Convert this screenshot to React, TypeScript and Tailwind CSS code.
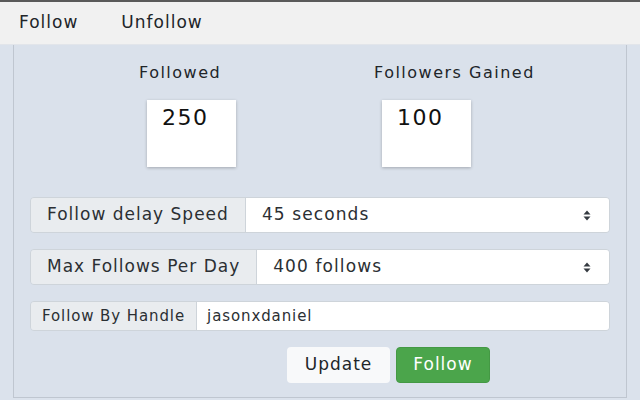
import React from 'react';

const font = { fontFamily: '"DejaVu Sans", "Liberation Sans", sans-serif' };

function SelectArrows() {
  return (
    <svg width="8" height="11" viewBox="0 0 8 11" className="text-[#343a40]">
      <path d="M4 0.5 L7.5 4.5 H0.5 Z" fill="currentColor" />
      <path d="M4 10.5 L7.5 6.5 H0.5 Z" fill="currentColor" />
    </svg>
  );
}

function SelectGroup({ label, value }: { label: string; value: string }) {
  return (
    <div className="flex h-[36px] rounded-[4px] border border-[#ced4da] overflow-hidden">
      <div className="shrink-0 flex items-center px-[16px] bg-[#e9ecef] border-r border-[#ced4da] text-[17px] tracking-[1px] text-[#2b2f33]">
        {label}
      </div>
      <div className="flex-1 flex items-center justify-between bg-white pl-[16px] pr-[18px] text-[17px] tracking-[1.1px] text-[#2b2f33]">
        <span>{value}</span>
        <SelectArrows />
      </div>
    </div>
  );
}

function StatBox({ label, value, width }: { label: string; value: string; width: string }) {
  return (
    <div className={`${width} flex flex-col items-start`}>
      <div className="text-[16px] tracking-[1.5px] text-[#212529] leading-none">{label}</div>
      <div className="mt-[19px] ml-[8px] w-[89px] h-[67px] bg-white shadow-[0_1px_3px_rgba(0,0,0,0.25)] pl-[15px] pt-[1px] text-[22px] tracking-[1.5px] text-[#111]">
        {value}
      </div>
    </div>
  );
}

export default function App() {
  return (
    <div className="w-[640px] h-[400px] overflow-hidden bg-[#dbe2ec] border-t-2 border-[#5a5a5a]" style={font}>
      <div className="h-[43px] bg-[#f1f1f1] flex items-center pl-[19px] gap-[43px] text-[17px] tracking-[1px] text-[#212529] border-b border-[#e2e5ea]">
        <span>Follow</span>
        <span>Unfollow</span>
      </div>
      <div className="ml-[13px] w-[614px] h-[353px] border-x border-b border-[#bfc6d0] bg-[#dae1eb] px-[16px]">
        <div className="flex pt-[20px] pl-[109px]">
          <StatBox label="Followed" value="250" width="w-[235px]" />
          <StatBox label="Followers Gained" value="100" width="w-[200px]" />
        </div>
        <div className="mt-[30px] flex flex-col gap-[16px]">
          <SelectGroup label="Follow delay Speed" value="45 seconds" />
          <SelectGroup label="Max Follows Per Day" value="400 follows" />
          <div className="flex h-[30px] rounded-[4px] border border-[#ced4da] overflow-hidden">
            <div className="shrink-0 flex items-center px-[11px] bg-[#e9ecef] border-r border-[#ced4da] text-[15px] tracking-[0.9px] text-[#2b2f33]">
              Follow By Handle
            </div>
            <div className="flex-1 flex items-center bg-white pl-[10px] text-[15px] tracking-[0.9px] text-[#2b2f33]">
              jasonxdaniel
            </div>
          </div>
        </div>
        <div className="mt-[16px] flex pl-[257px] gap-[6px]">
          <button className="w-[103px] h-[36px] rounded-[4px] bg-[#f8f9fa] text-[17px] tracking-[1px] text-[#212529]" style={font}>
            Update
          </button>
          <button className="w-[94px] h-[36px] rounded-[4px] bg-[#4ba54b] border border-[#449944] text-[17px] tracking-[1px] text-white" style={font}>
            Follow
          </button>
        </div>
      </div>
    </div>
  );
}
